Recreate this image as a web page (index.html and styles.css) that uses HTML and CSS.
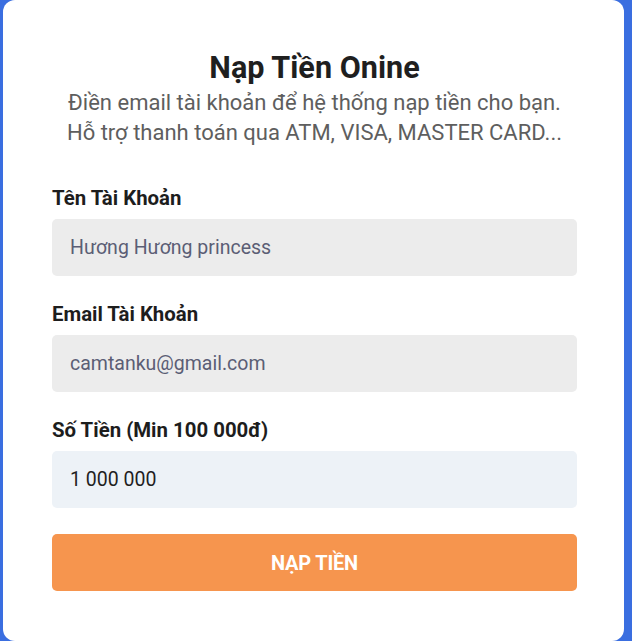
FILE: index.html
```html
<!DOCTYPE html>
<html lang="vi">
<head>
<meta charset="utf-8">
<title>Nạp Tiền Onine</title>
<link rel="stylesheet" href="styles.css">
</head>
<body>
<div class="page">
  <div class="card">
    <div class="head">
      <h1 class="title">Nạp Tiền Onine</h1>
      <p class="sub">Điền email tài khoản để hệ thống nạp tiền cho bạn.<br>Hỗ trợ thanh toán qua ATM, VISA, MASTER CARD...</p>
    </div>
    <form class="form">
      <div class="field">
        <label class="label">Tên Tài Khoản</label>
        <div class="input input-ro">Hương Hương princess</div>
      </div>
      <div class="field">
        <label class="label">Email Tài Khoản</label>
        <div class="input input-ro">camtanku@gmail.com</div>
      </div>
      <div class="field">
        <label class="label">Số Tiền (Min 100 000đ)</label>
        <div class="input input-edit">1 000 000</div>
      </div>
      <button type="button" class="btn">NẠP TIỀN</button>
    </form>
  </div>
</div>
</body>
</html>
```

FILE: styles.css
```css
html, body {
  margin: 0;
  padding: 0;
  background: #3a6ee0;
  height: 641px;
  overflow: hidden;
}
body {
  font-family: Roboto, "Liberation Sans", sans-serif;
}
.page {
  padding-left: 3px;
}
.card {
  width: 621px;
  height: 641px;
  box-sizing: border-box;
  background: #fff;
  border-radius: 12px;
  padding: 50px 47px 0 49px;
}
.head {
  text-align: center;
}
.title {
  margin: 0;
  font-size: 30.6px;
  font-weight: 700;
  color: #1f1f1f;
  line-height: 36px;
}
.sub {
  margin: 2px 0 0;
  font-size: 22px;
  line-height: 30px;
  color: #5e5e5e;
}
.form {
  margin-top: 38px;
  display: flex;
  flex-direction: column;
}
.field {
  display: flex;
  flex-direction: column;
  margin-bottom: 26px;
}
.label {
  font-size: 20.4px;
  font-weight: 700;
  color: #1d1d1d;
  line-height: 24px;
  margin-bottom: 9px;
}
.input {
  height: 57px;
  box-sizing: border-box;
  border-radius: 5px;
  padding: 0 18px;
  display: flex;
  align-items: center;
  font-size: 19.5px;
}
.input-ro {
  background: #ececec;
  color: #5b5e75;
}
.input-edit {
  background: #edf2f7;
  color: #1f1f1f;
}
.btn {
  height: 57px;
  border: none;
  border-radius: 5px;
  background: #f6954e;
  color: #fff;
  font-family: Roboto, "Liberation Sans", sans-serif;
  font-size: 20px;
  font-weight: 700;
  letter-spacing: -0.2px;
}
```
